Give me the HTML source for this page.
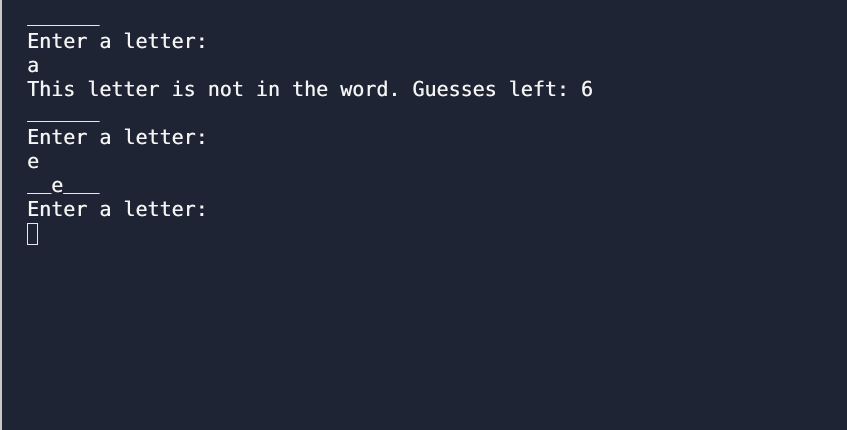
<!DOCTYPE html>
<html><head><style>
html,body{margin:0;padding:0;}
body{width:847px;height:430px;background:#1e2434;position:relative;overflow:hidden;font-family:"DejaVu Sans Mono","Liberation Mono",monospace;font-size:20px;color:#f4f4f4;}
.b{position:absolute;left:0;top:0;width:2px;height:430px;background:#c8c8c8;}
pre{position:absolute;left:27px;top:5px;margin:0;font:inherit;line-height:24px;white-space:pre;text-shadow:0.4px 0 0 #f4f4f4;}
.u{position:relative;top:-3px;}
.c{position:absolute;left:27px;top:223px;width:9px;height:20px;border:1px solid #e8e8e8;}
</style></head><body>
<div class="b"></div>
<pre><span class="u">______</span>
Enter a letter:
a
This letter is not in the word. Guesses left: 6
<span class="u">______</span>
Enter a letter:
e
<span class="u">__</span>e<span class="u">___</span>
Enter a letter:</pre>
<div class="c"></div>
</body></html>
